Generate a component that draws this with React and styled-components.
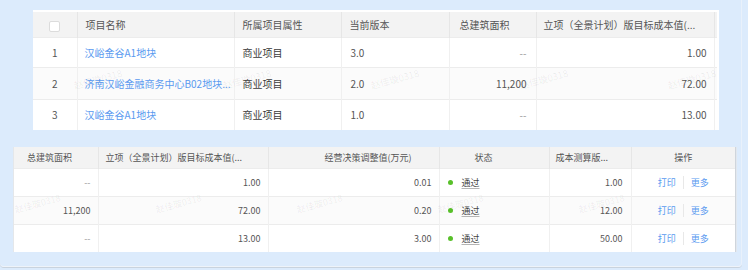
import React from 'react';
import styled, { createGlobalStyle } from 'styled-components';

const GlobalStyle = createGlobalStyle`
  html, body {
    margin: 0;
    padding: 0;
    background: #dcebfc;
  }
  body {
    font-family: "Noto Sans CJK SC", "Noto Sans", sans-serif;
  }
`;

const Page = styled.div`
  width: 748px;
  height: 270px;
  overflow: hidden;
  background: #dcebfc;
`;

const Panel = styled.div`
  width: 742px;
  height: 267px;
  box-sizing: border-box;
  padding-top: 10px;
  border-right: 1px solid #e9f1fb;
  border-bottom: 1px solid #eef3f9;
  border-radius: 0 0 4px 4px;
  box-shadow: 0 1px 0 #c9d3de;
`;

const Card = styled.div`
  position: relative;
  overflow: hidden;
  background: #fff;
  margin-left: ${p => p.$left}px;
  width: ${p => p.$width}px;
  margin-top: ${p => p.$top || 0}px;
  box-sizing: border-box;
  padding: ${p => p.$pad || '0'};
  box-shadow: ${p => p.$shadow ? '-1px 0 0 #e4e7ea, 1px 0 0 #cfd5dc, 2px 0 0 #e2e8ef' : 'none'};
`;

const Table = styled.table`
  border-collapse: collapse;
  table-layout: fixed;
  width: 100%;
  font-size: ${p => p.$size}px;
  color: #3a3a3a;
`;

const HeadCell = styled.th`
  background: #f3f3f3;
  font-weight: normal;
  color: #555;
  height: ${p => p.$h}px;
  padding: 0 ${p => p.$pr ?? 8}px 0 ${p => p.$pl ?? 8}px;
  text-align: ${p => p.$align || 'left'};
  border-left: 1px solid #e6e6e6;
  white-space: nowrap;
  overflow: hidden;
  &:first-child { border-left: none; }
`;

const Row = styled.tr`
  height: ${p => p.$h}px;
  background: ${p => p.$striped ? '#fbfbfb' : '#fff'};
  border-top: 1px solid #ececec;
`;

const Cell = styled.td`
  padding: 0 ${p => p.$pr ?? 8}px 0 ${p => p.$pl ?? 8}px;
  text-align: ${p => p.$align || 'left'};
  border-left: 1px solid #f0f0f0;
  white-space: nowrap;
  overflow: hidden;
  color: ${p => p.$muted ? '#999' : p.$num ? '#555' : '#3a3a3a'};
  &:first-child { border-left: none; }
`;

const Check = styled.span`
  display: inline-block;
  width: 9px;
  height: 9px;
  border: 1px solid #dcdcdc;
  border-radius: 2px;
  background: #fff;
  vertical-align: middle;
`;

const Link = styled.a`
  color: #5a9af0;
  text-decoration: none;
  cursor: pointer;
`;

const Status = styled.span`
  display: inline-flex;
  align-items: center;
  gap: 9px;
  color: #444;
  &::before {
    content: '';
    width: 5px;
    height: 5px;
    border-radius: 50%;
    background: #58c02a;
  }
`;

const StatusText = styled.span`
  text-decoration: underline;
  text-decoration-color: #b5b5b5;
  text-decoration-thickness: 1px;
  text-underline-offset: 2px;
`;

const Actions = styled.div`
  display: flex;
  align-items: center;
  justify-content: center;
  gap: 7px;
`;

const Divider = styled.span`
  width: 1px;
  height: 13px;
  background: #e8e8e8;
`;

const MarkRow = styled.div`
  position: absolute;
  left: ${p => p.$x}px;
  top: ${p => p.$y}px;
  display: flex;
  gap: ${p => p.$gap}px;
  pointer-events: none;
`;

const Mark = styled.span`
  font-size: ${p => p.$size}px;
  color: rgba(0, 0, 0, 0.07);
  transform: rotate(-15deg);
  white-space: nowrap;
`;

const topRows = [
  { no: 1, name: '汉峪金谷A1地块', attr: '商业项目', ver: '3.0', area: '--', cost: '1.00', h: 30 },
  { no: 2, name: '济南汉峪金融商务中心B02地块...', attr: '商业项目', ver: '2.0', area: '11,200', cost: '72.00', h: 32 },
  { no: 3, name: '汉峪金谷A1地块', attr: '商业项目', ver: '1.0', area: '--', cost: '13.00', h: 30 },
];

const bottomRows = [
  { area: '--', cost: '1.00', adj: '0.01', calc: '1.00' },
  { area: '11,200', cost: '72.00', adj: '0.20', calc: '12.00' },
  { area: '--', cost: '13.00', adj: '3.00', calc: '50.00' },
];

const Watermarks = ({ x, y, gap, size, count }) => (
  <MarkRow $x={x} $y={y} $gap={gap}>
    {Array.from({ length: count }).map((_, i) => (
      <Mark key={i} $size={size}>赵佳璇0318</Mark>
    ))}
  </MarkRow>
);

const App = () => (
  <Page>
    <GlobalStyle />
    <Panel>
      <Card $left={33} $width={686} $pad="2px 2px 0 0">
        <Table $size={10}>
          <colgroup>
            <col style={{ width: 44 }} />
            <col style={{ width: 157 }} />
            <col style={{ width: 107 }} />
            <col style={{ width: 108 }} />
            <col style={{ width: 87 }} />
            <col style={{ width: 178 }} />
            <col style={{ width: 3 }} />
          </colgroup>
          <thead>
            <tr>
              <HeadCell $h={25} $align="center"><Check /></HeadCell>
              <HeadCell $h={25}>项目名称</HeadCell>
              <HeadCell $h={25}>所属项目属性</HeadCell>
              <HeadCell $h={25}>当前版本</HeadCell>
              <HeadCell $h={25} $pl={10}>总建筑面积</HeadCell>
              <HeadCell $h={25} $pl={7}>立项（全景计划）版目标成本值(...</HeadCell>
              <HeadCell $h={25} $pl={0} $pr={0} />
            </tr>
          </thead>
          <tbody>
            {topRows.map((r, i) => (
              <Row key={r.no} $h={r.h} $striped={i === 1}>
                <Cell $align="center" $num>{r.no}</Cell>
                <Cell $pl={7}><Link>{r.name}</Link></Cell>
                <Cell>{r.attr}</Cell>
                <Cell $pl={9} $num>{r.ver}</Cell>
                <Cell $align="right" $pr={9} $muted={r.area === '--'} $num>{r.area}</Cell>
                <Cell $align="right" $pr={7} $num>{r.cost}</Cell>
                <Cell $pl={0} $pr={0} />
              </Row>
            ))}
          </tbody>
        </Table>
        <Watermarks x={40} y={62} gap={99} size={9.5} count={5} />
      </Card>

      <Card $left={14} $width={721} $top={17} $shadow>
        <Table $size={9}>
          <colgroup>
            <col style={{ width: 84 }} />
            <col style={{ width: 170 }} />
            <col style={{ width: 171 }} />
            <col style={{ width: 110 }} />
            <col style={{ width: 82 }} />
            <col style={{ width: 104 }} />
          </colgroup>
          <thead>
            <tr>
              <HeadCell $h={21} $pl={13}>总建筑面积</HeadCell>
              <HeadCell $h={21} $pl={7}>立项（全景计划）版目标成本值(...</HeadCell>
              <HeadCell $h={21} $align="right" $pr={27}>经营决策调整值(万元)</HeadCell>
              <HeadCell $h={21} $pl={35}>状态</HeadCell>
              <HeadCell $h={21} $pl={6}>成本测算版...</HeadCell>
              <HeadCell $h={21} $align="center">操作</HeadCell>
            </tr>
          </thead>
          <tbody>
            {bottomRows.map((r, i) => (
              <Row key={i} $h={28} $striped={i === 1}>
                <Cell $align="right" $pr={7} $muted={r.area === '--'} $num>{r.area}</Cell>
                <Cell $align="right" $pr={7} $num>{r.cost}</Cell>
                <Cell $align="right" $pr={7} $num>{r.adj}</Cell>
                <Cell $pl={8}><Status><StatusText>通过</StatusText></Status></Cell>
                <Cell $align="right" $pr={8} $num>{r.calc}</Cell>
                <Cell $align="center">
                  <Actions>
                    <Link>打印</Link>
                    <Divider />
                    <Link>更多</Link>
                  </Actions>
                </Cell>
              </Row>
            ))}
          </tbody>
        </Table>
        <Watermarks x={0} y={50} gap={94} size={9} count={5} />
      </Card>
    </Panel>
  </Page>
);

export default App;
